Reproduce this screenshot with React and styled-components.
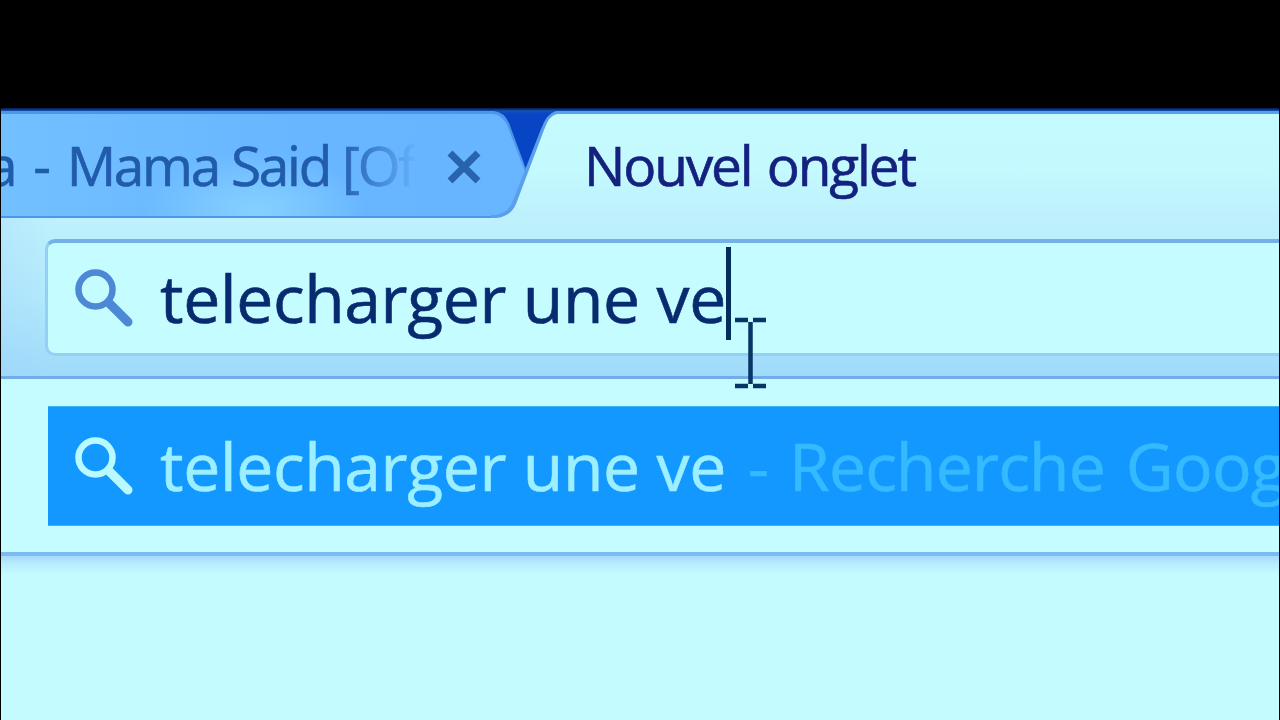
import React from "react";
import styled, { createGlobalStyle } from "styled-components";

const GlobalStyle = createGlobalStyle`
  * { box-sizing: border-box; }
  html, body { margin: 0; background: #000; overflow: hidden; }
  body { font-family: "Open Sans", "Noto Sans", sans-serif; }
`;

const Window = styled.main`
  display: flex;
  flex-direction: column;
  width: 1280px;
  height: 720px;
  padding: 108px 1px 0;
  overflow: hidden;
  background: #000;
`;

const TabStrip = styled.nav`
  display: flex;
  height: 110px;
  flex: none;
  padding-top: 3px;
  overflow: hidden;
  background: linear-gradient(#06164a 0, #1254b8 3px, #0845c4 6px, #0645c4 100%);
`;

const Tab = styled.div`
  position: relative;
  display: flex;
  align-items: center;
  flex: none;
  height: 107px;
  white-space: nowrap;
  font-size: 55px;
  line-height: 76px;
`;

const BackTab = styled(Tab)`
  width: 540px;
  background: #4e96ea;
  clip-path: path("M0 0H493Q503 1 508 12L525 58L540 107H0Z");

  &::before {
    content: "";
    position: absolute;
    inset: 0;
    background:
      radial-gradient(ellipse 110px 60px at 255px 100px, #86d0ff 0, #80caffaa 55%, transparent 100%),
      linear-gradient(90deg, #73c0ff, #67b6ff 55%, #69b5ff);
    clip-path: path("M0 3H492Q501 4 506 14L523 58L538 105H0Z");
  }
`;

const FrontTab = styled(Tab)`
  width: 800px;
  margin-left: -50px;
  background: #5a9fea;
  clip-path: path("M0 107V104H4Q16 103 21 92L50 18Q56 2 65 0H800V107Z");

  &::before {
    content: "";
    position: absolute;
    inset: 0;
    background: linear-gradient(#c5fafe 0, #c4f9ff 55%, #bdf0fd 100%);
    clip-path: path("M0 107H6Q20 105 25 93L53 19Q58 4 66 3H800V107Z");
  }
`;

const TabTitle = styled.span`
  position: relative;
  color: ${(p) => p.$color};
  letter-spacing: ${(p) => p.$tracking};
  word-spacing: ${(p) => p.$gap || "0px"};
  margin-left: ${(p) => p.$offset};
  -webkit-text-stroke: 0.6px currentColor;
  ${(p) => p.$fade && `
    width: 428px;
    -webkit-mask-image: linear-gradient(90deg, #000 350px, transparent 432px);
    mask-image: linear-gradient(90deg, #000 350px, transparent 432px);
    overflow: hidden;
  `}
`;

const TitleLead = styled.span`
  word-spacing: 6px;
`;

const CloseIcon = styled.svg`
  position: relative;
  top: 2px;
  width: 34px;
  height: 34px;
  margin-left: 32px;
`;

const Toolbar = styled.header`
  flex: none;
  height: 161px;
  padding: 21px 0 0 44px;
  overflow: hidden;
  border-bottom: 3px solid #70ade9;
  background:
    linear-gradient(90deg, #a0d2ff44, transparent 50px),
    linear-gradient(#bef1fb, #b2e9fb 50%, #9fdafa);
`;

const Omnibox = styled.div`
  display: flex;
  align-items: center;
  width: 1300px;
  height: 117px;
  padding-left: 25px;
  border: 3px solid #94cff5;
  border-top: 4px solid #73b1e8;
  border-radius: 10px;
  background: #c4fcff;
`;

const SearchIcon = styled.svg`
  flex: none;
  width: 60px;
  height: 60px;
  color: ${(p) => p.$color};
`;

const Query = styled.span`
  flex: none;
  margin: ${(p) => p.$shift} 0 0 27px;
  color: ${(p) => p.$color};
  font-size: 66px;
  line-height: 90px;
  letter-spacing: -0.35px;
  white-space: pre;
  -webkit-text-stroke: 0.6px currentColor;
`;

const QueryHint = styled.span`
  margin-left: 1px;
  color: #35baff;
  letter-spacing: -0.8px;
  word-spacing: 4.5px;
`;

const Caret = styled.i`
  flex: none;
  width: 5px;
  height: 93px;
  margin: -10px 0 0 0;
  background: #042d5c;
`;

const Suggestions = styled.section`
  flex: none;
  height: 177px;
  padding: 27px 0 0 47px;
  border-bottom: 4px solid #7fb9f1;
  background: #c4fcff;
`;

const Suggestion = styled.div`
  display: flex;
  align-items: center;
  height: 120px;
  padding-left: 25px;
  overflow: hidden;
  border-top: 1px solid #3cb5ed;
  border-bottom: 1px solid #3cb5ed;
  background: #1298ff;
`;

const Page = styled.section`
  flex: 1;
  background: linear-gradient(#a3d9fb 0, #b5ebfd 7px, #c4fbff 18px);
`;

const Pointer = styled.svg`
  position: absolute;
  left: 734px;
  top: 316px;
  width: 33px;
  height: 74px;
`;

function Magnifier({ color }) {
  return (
    <SearchIcon viewBox="0 0 60 60" $color={color} fill="none" stroke="currentColor">
      <circle cx="22.5" cy="21.5" r="17" strokeWidth="6.5" />
      <path d="M36 35L55 54" strokeWidth="9" strokeLinecap="round" />
      <path d="M33 32L40 39" strokeWidth="6" />
    </SearchIcon>
  );
}

export default function App() {
  return (
    <Window>
      <GlobalStyle />
      <TabStrip>
        <BackTab>
          <TabTitle $color="#205bac" $tracking="-2.3px" $offset="-14px" $fade>
            <TitleLead>a - </TitleLead>Mama Said [Of
          </TabTitle>
          <CloseIcon viewBox="0 0 34 34" fill="none" stroke="#2864ad" strokeWidth="7">
            <path d="M3 3L31 31M31 3L3 31" />
          </CloseIcon>
        </BackTab>
        <FrontTab>
          <TabTitle $color="#15217f" $tracking="-2.15px" $gap="3px" $offset="93px">Nouvel onglet</TabTitle>
        </FrontTab>
      </TabStrip>
      <Toolbar>
        <Omnibox>
          <Magnifier color="#4c88d3" />
          <Query $color="#082b70" $shift="-3px">telecharger une ve</Query>
          <Caret />
        </Omnibox>
      </Toolbar>
      <Suggestions>
        <Suggestion>
          <Magnifier color="#b8faff" />
          <Query $color="#9befff" $shift="-3px">telecharger une ve<QueryHint> - Recherche Google</QueryHint></Query>
        </Suggestion>
      </Suggestions>
      <Page />
      <Pointer viewBox="0 0 33 74" fill="none" stroke="#073565" strokeWidth="4.5">
        <path d="M1 4H14M19 4H32M1 70H14M19 70H32M16.5 6V68" />
      </Pointer>
    </Window>
  );
}
